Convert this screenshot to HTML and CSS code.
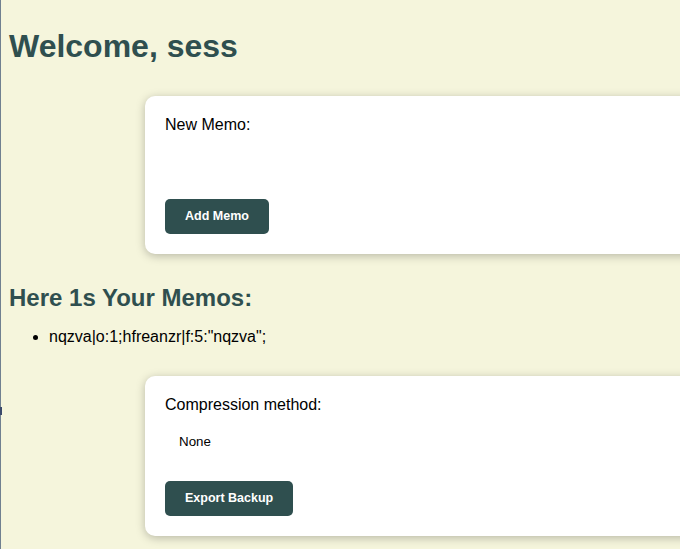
FILE: index.html
```html
<!DOCTYPE html>
<html lang="en">
<head>
<meta charset="utf-8">
<title>Memos</title>
<link rel="stylesheet" href="styles.css">
</head>
<body>
<span class="edge-mark"></span>
<h1 class="title">Welcome, sess</h1>

<form class="card">
  <label class="field-label" for="memo">New Memo:</label>
  <textarea id="memo" class="memo-input"></textarea>
  <button type="button" class="btn">Add Memo</button>
</form>

<h2 class="subtitle">Here 1s Your Memos:</h2>
<ul class="memo-list">
  <li>nqzva|o:1;hfreanzr|f:5:"nqzva";</li>
</ul>

<form class="card">
  <label class="field-label">Compression method:</label>
  <div class="select-box">None</div>
  <button type="button" class="btn">Export Backup</button>
</form>
</body>
</html>
```
FILE: styles.css
```css
html {
  background: #f5f5dc;
  border-left: 1px solid #708090;
  overflow: hidden;
  height: 100%;
}

body {
  margin: 0;
  padding: 8px;
  font-family: "Liberation Sans", Arial, sans-serif;
  color: #000;
  position: relative;
}

.edge-mark {
  position: fixed;
  left: 0;
  top: 407px;
  width: 2px;
  height: 8px;
  background: #3b4a6b;
}

.title {
  font-size: 32px;
  font-weight: bold;
  color: #2f4f4f;
  margin: 20px 0 31px;
}

.card {
  display: block;
  width: 600px;
  margin: 30px 0 30px 136px;
  padding: 20px;
  background: #fff;
  border-radius: 10px;
  box-shadow: 0 2px 10px rgba(0, 0, 0, 0.25);
}

.field-label {
  display: block;
  font-size: 16px;
}

.memo-input {
  display: block;
  width: 100%;
  height: 55px;
  margin: 5px 0;
  padding: 0;
  border: 0;
  outline: none;
  resize: none;
  background: transparent;
}

.select-box {
  font-size: 13.333px;
  line-height: 15.33px;
  padding: 10px 14px;
  margin: 10px 0 21px;
}

.btn {
  display: block;
  background: #2f4f4f;
  color: #fff;
  border: 0;
  border-radius: 5px;
  padding: 10px 20px;
  font-family: "Liberation Sans", Arial, sans-serif;
  font-size: 12.5px;
  font-weight: bold;
  line-height: 15.33px;
}

.subtitle {
  font-size: 24px;
  font-weight: bold;
  color: #2f4f4f;
  margin: 30px 0 16px;
}

.memo-list {
  margin: 16px 0;
  padding-left: 40px;
  font-size: 16px;
}
```
